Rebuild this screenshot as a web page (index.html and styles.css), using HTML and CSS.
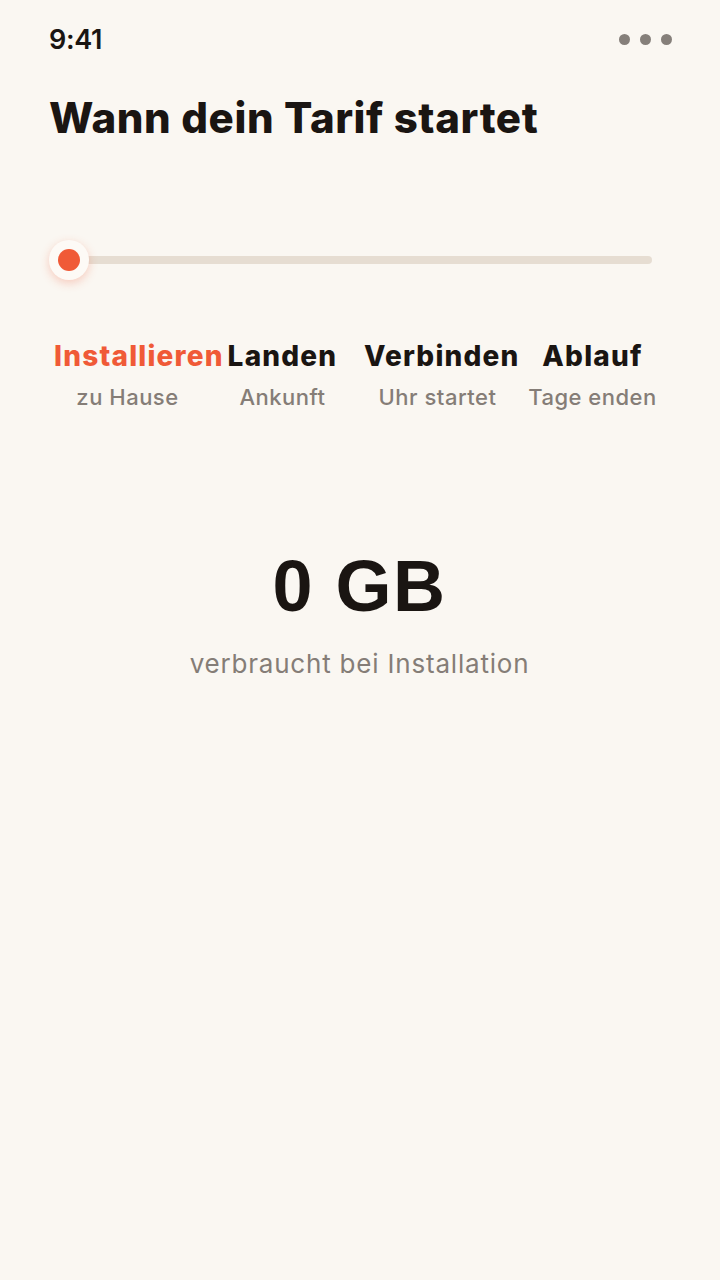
FILE: index.html
```html
<html>
	<head>
		<title>Tarif</title>
		<meta charset="UTF-8">
		<link rel="stylesheet" href="styles.css">
	</head>
	<body>

		<div class="statusbar">
			<span class="clock">9:41</span>
			<span class="dots"><i></i><i></i><i></i></span>
		</div>

		<h1 class="title">Wann dein Tarif startet</h1>

		<div class="slider">
			<div class="track"></div>
			<div class="knob"><div class="knob_dot"></div></div>
		</div>

		<div class="steps">
			<div class="step active">
				<div class="step_name">Installieren</div>
				<div class="step_sub">zu Hause</div>
			</div>
			<div class="step">
				<div class="step_name">Landen</div>
				<div class="step_sub">Ankunft</div>
			</div>
			<div class="step">
				<div class="step_name">Verbinden</div>
				<div class="step_sub">Uhr startet</div>
			</div>
			<div class="step">
				<div class="step_name">Ablauf</div>
				<div class="step_sub">Tage enden</div>
			</div>
		</div>

		<div class="usage">
			<div class="usage_value">0 GB</div>
			<div class="usage_label">verbraucht bei Installation</div>
		</div>

	</body>
</html>
```

FILE: styles.css
```css
body {
	margin: 0px;
	padding: 0px 50px 0px 49px;
	background-color: #faf7f2;
	color: #1a1512;
	font-family: Inter, 'Liberation Sans', sans-serif;
	height: 1280px;
	overflow: hidden;
}

/* top bar with clock and menu dots */
.statusbar {
	display: flex;
	justify-content: space-between;
	align-items: center;
	height: 78px;
}
.clock {
	font-size: 27px;
	font-weight: 600;
	letter-spacing: -0.3px;
}
.dots {
	display: flex;
	gap: 10px;
	margin-right: -2px;
}
.dots i {
	width: 11px;
	height: 11px;
	border-radius: 50%;
	background-color: #857f7a;
}

.title {
	margin: 16px 0px 0px 0px;
	font-size: 42px;
	font-weight: 800;
	letter-spacing: 0.6px;
	line-height: 48px;
}

/* timeline slider */
.slider {
	position: relative;
	height: 40px;
	margin-top: 98px;
	display: flex;
	align-items: center;
}
.track {
	margin-left: 20px;
	margin-right: 18px;
	flex: 1;
	height: 8px;
	border-radius: 4px;
	background-color: #e6ddd2;
}
.knob {
	position: absolute;
	left: 0px;
	top: 0px;
	width: 40px;
	height: 40px;
	border-radius: 50%;
	background-color: #fdfaf6;
	box-shadow: 0px 3px 10px rgba(240, 90, 55, 0.28);
	display: flex;
	align-items: center;
	justify-content: center;
}
.knob_dot {
	width: 22px;
	height: 22px;
	border-radius: 50%;
	background-color: #f05a37;
}

.steps {
	display: grid;
	grid-template-columns: repeat(4, 1fr);
	margin-top: 60px;
	margin-left: 1px;
}
.step {
	padding: 0px 4px;
	text-align: center;
	min-width: 0;
}
.step_name {
	font-size: 28px;
	font-weight: 800;
	letter-spacing: 1.2px;
	line-height: 32px;
	white-space: nowrap;
}
.step.active .step_name {
	color: #f05a37;
}
.step_sub {
	margin-top: 12px;
	font-size: 22px;
	font-weight: 500;
	color: #857d77;
	letter-spacing: 0.5px;
	white-space: nowrap;
}

.usage {
	margin-top: 136px;
	text-align: center;
}
.usage_value {
	font-family: 'Liberation Sans', Arial, sans-serif;
	font-size: 72px;
	font-weight: 700;
	letter-spacing: 1.5px;
	line-height: 80px;
}
.usage_label {
	margin-top: 22px;
	font-size: 26px;
	color: #857d77;
	letter-spacing: 0.8px;
}
```
